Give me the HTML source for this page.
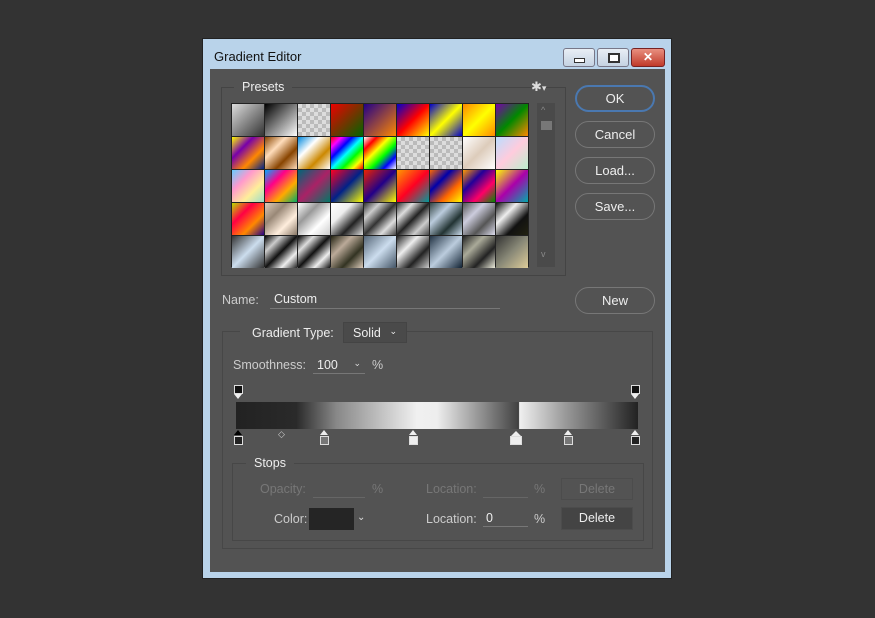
<!DOCTYPE html><html><head><style>
body{margin:0;width:875px;height:618px;background:#333;position:relative;overflow:hidden;font-family:"Liberation Sans",sans-serif;font-size:12.5px;color:#ddd}
.a{position:absolute}
.win{left:202px;top:38px;width:470px;height:541px;background:#b9d3ea;border:1px solid #222;box-sizing:border-box}
.in{left:210px;top:69px;width:455px;height:503px;background:#535353}
.btn{position:absolute;left:575px;width:80px;height:27px;border:1px solid #777;border-radius:14px;box-sizing:border-box;text-align:center;line-height:25px;color:#eee;font-size:13px}
.c{position:absolute;width:32px;height:32px}
.box{position:absolute;border:1px solid #444;box-sizing:border-box}
.ul{position:absolute;border-bottom:1px solid #777}
.chk{background-color:#ddd;background-image:linear-gradient(45deg,#bbb 25%,transparent 25%,transparent 75%,#bbb 75%),linear-gradient(45deg,#bbb 25%,transparent 25%,transparent 75%,#bbb 75%);background-size:8px 8px;background-position:0 0,4px 4px}
.st{position:absolute;width:9px;height:9px;border:1px solid #ddd;box-sizing:border-box}
</style></head><body>
<div class="a win"></div>
<div class="a" style="left:214px;top:49px;color:#111;font-size:13px">Gradient Editor</div>
<div class="a" style="left:563px;top:48px;width:30px;height:17px;border:1px solid #778;border-radius:3px;background:linear-gradient(#e8eef5,#c5d3e2)"><div class="a" style="left:10px;top:9px;width:9px;height:3px;border:1px solid #333;background:#fff"></div></div>
<div class="a" style="left:597px;top:48px;width:30px;height:17px;border:1px solid #778;border-radius:3px;background:linear-gradient(#e8eef5,#c5d3e2)"><div class="a" style="left:10px;top:4px;width:8px;height:6px;border:2px solid #333;background:#fff"></div></div>
<div class="a" style="left:631px;top:48px;width:32px;height:17px;border:1px solid #722;border-radius:3px;background:linear-gradient(#e89080,#c03a2a);color:#fff;text-align:center;font-weight:bold;font-size:12px;line-height:17px">✕</div>
<div class="a in"></div>
<div class="box" style="left:221px;top:87px;width:345px;height:189px"></div>
<div class="a" style="left:234px;top:80px;background:#535353;padding:0 8px;color:#eee">Presets</div>
<div class="a" style="left:531px;top:79px;color:#ddd;font-size:13px">✱<span style="font-size:9px">▾</span></div>
<div class="a" style="left:231px;top:103px;width:298px;height:164px;background:#222"></div>
<div class="a" style="left:537px;top:103px;width:18px;height:164px;background:#4a4a4a"><div class="a" style="left:4px;top:18px;width:11px;height:9px;background:#777"></div><div class="a" style="left:4px;top:2px;font-size:9px;color:#888">^</div><div class="a" style="left:4px;top:146px;font-size:9px;color:#888">v</div></div>
<div id="g"></div>
<div class="btn" style="top:85px;border:2px solid #4a78b0;line-height:23px">OK</div>
<div class="btn" style="top:121px">Cancel</div>
<div class="btn" style="top:157px">Load...</div>
<div class="btn" style="top:193px">Save...</div>
<div class="btn" style="top:287px">New</div>
<div class="a" style="left:222px;top:293px;color:#ccc">Name:</div>
<div class="ul" style="left:270px;top:292px;width:230px;height:16px"><span style="padding-left:4px;color:#eee">Custom</span></div>
<div class="box" style="left:222px;top:331px;width:431px;height:218px;border-color:#474747"></div>
<div class="a" style="left:240px;top:326px;background:#535353;padding:0 12px;color:#eee">Gradient Type:</div>
<div class="a" style="left:343px;top:322px;width:64px;height:21px;background:#4a4a4a;border:1px solid #444;box-sizing:border-box;padding:3px 9px;color:#eee">Solid <span style="float:right;font-size:9px">⌄</span></div>
<div class="a" style="left:233px;top:358px;color:#ccc">Smoothness:</div>
<div class="ul" style="left:313px;top:358px;width:52px;height:15px"><span style="padding-left:4px;color:#eee">100</span><span style="float:right;font-size:9px;padding-right:4px">⌄</span></div>
<div class="a" style="left:372px;top:358px;color:#ccc">%</div>
<div class="a" style="left:236px;top:402px;width:402px;height:27px;background:linear-gradient(90deg,#222 0%,#2a2a2a 15%,#888 25%,#f0f0f0 45%,#eee 50%,#888 62%,#444 70%,#333 70.3%,#f0f0f0 70.5%,#999 82%,#222 100%)"></div>
<div class="st" style="left:234px;top:385px;background:#111"></div><div class="a" style="left:234px;top:394px;width:0;border:4px solid transparent;border-top:5px solid #eee"></div>
<div class="st" style="left:631px;top:385px;background:#111"></div><div class="a" style="left:631px;top:394px;width:0;border:4px solid transparent;border-top:5px solid #eee"></div>
<div class="st" style="left:234px;top:436px;background:#222"></div><div class="a" style="left:234px;top:426px;border:4px solid transparent;border-bottom:5px solid #000"></div>
<div class="a" style="left:278px;top:429px;font-size:9px;color:#ccc">◇</div>
<div class="st" style="left:320px;top:436px;background:#777"></div><div class="a" style="left:320px;top:426px;border:4px solid transparent;border-bottom:5px solid #eee"></div>
<div class="st" style="left:409px;top:436px;background:#eee"></div><div class="a" style="left:409px;top:426px;border:4px solid transparent;border-bottom:5px solid #eee"></div>
<div class="st" style="left:510px;top:436px;background:#eee;width:12px"></div><div class="a" style="left:511px;top:426px;border:5px solid transparent;border-bottom:5px solid #eee"></div>
<div class="st" style="left:564px;top:436px;background:#777"></div><div class="a" style="left:564px;top:426px;border:4px solid transparent;border-bottom:5px solid #eee"></div>
<div class="st" style="left:631px;top:436px;background:#222"></div><div class="a" style="left:631px;top:426px;border:4px solid transparent;border-bottom:5px solid #eee"></div>
<div class="box" style="left:232px;top:463px;width:412px;height:78px;border-color:#474747"></div>
<div class="a" style="left:246px;top:456px;background:#535353;padding:0 8px;color:#eee">Stops</div>
<div class="a" style="left:260px;top:482px;color:#777">Opacity:</div>
<div class="ul" style="left:313px;top:482px;width:52px;height:15px;border-color:#666"></div>
<div class="a" style="left:372px;top:482px;color:#777">%</div>
<div class="a" style="left:426px;top:482px;color:#777">Location:</div>
<div class="ul" style="left:483px;top:482px;width:45px;height:15px;border-color:#666"></div>
<div class="a" style="left:534px;top:482px;color:#777">%</div>
<div class="a" style="left:561px;top:478px;width:72px;height:22px;border:1px solid #4c4c4c;box-sizing:border-box;text-align:center;line-height:20px;color:#777">Delete</div>
<div class="a" style="left:274px;top:512px;color:#ccc">Color:</div>
<div class="a" style="left:309px;top:508px;width:45px;height:22px;background:#252525"></div>
<div class="a" style="left:357px;top:512px;font-size:10px">⌄</div>
<div class="a" style="left:426px;top:512px;color:#ccc">Location:</div>
<div class="ul" style="left:483px;top:511px;width:45px;height:15px"><span style="padding-left:3px;color:#eee">0</span></div>
<div class="a" style="left:534px;top:512px;color:#ccc">%</div>
<div class="a" style="left:561px;top:507px;width:72px;height:23px;background:#444;border:1px solid #4c4c4c;box-sizing:border-box;text-align:center;line-height:21px;color:#eee">Delete</div>
<script>
var G=[
["#ddd,#333","#000,#fff","chk","#e00,#060","#208,#f80","#00c,#f00,#ff0","#00c,#ff0,#00c","#f80,#ff0,#f80","#70a,#080,#f80"],
["#ff0,#70a,#f80,#028","#840,#fdb,#840,#fdb","#08d,#fff,#c80,#fff","#f00,#f0f,#00f,#0ff,#0f0,#ff0,#f00","#fff,#f00,#ff0,#0f0,#00f,#fff","chk","chk","#fff,#dcb,#fff","#bdf,#fcd,#bec"],
["#6cf,#f9c,#fe9,#9dc","#0af,#f08,#fa0,#0a6","#067,#a26,#076","#f02,#028,#ff0","#e20,#208,#ff0","#f90,#f02,#099","#f60,#00a,#f60,#ff0","#f90,#209,#f06,#080","#ff0,#a0a,#0aa"],
["#bd0,#f04,#f80,#208","#dcb,#987,#fed,#876","#fff,#999,#fff,#ccc","#fff,#eee,#222,#ddd","#333,#ccc,#333,#ddd,#444","#333,#ddd,#222,#ccc,#444","#344,#bcd,#233,#cde","#555,#ccd,#555,#dde","#111,#eee,#111,#221"],
["#333,#cde,#333","#000,#ccc,#111,#eee,#222","#000,#ddd,#111,#eee,#111","#221,#ba9,#332,#dcb","#567,#cde,#456","#222,#eee,#222,#ccc","#234,#bcd,#123","#222,#aa9,#222,#eed","#333,#887,#dc9"]];
var h="";for(var r=0;r<5;r++)for(var c=0;c<9;c++){var v=G[r][c];var s=v=="chk"?'class="c chk" style="':'class="c" style="background:linear-gradient(135deg,'+v+');';h+='<div '+s+'left:'+(232+c*33)+'px;top:'+(104+r*33)+'px"></div>';}
document.getElementById("g").innerHTML=h;
</script>
</body></html>
